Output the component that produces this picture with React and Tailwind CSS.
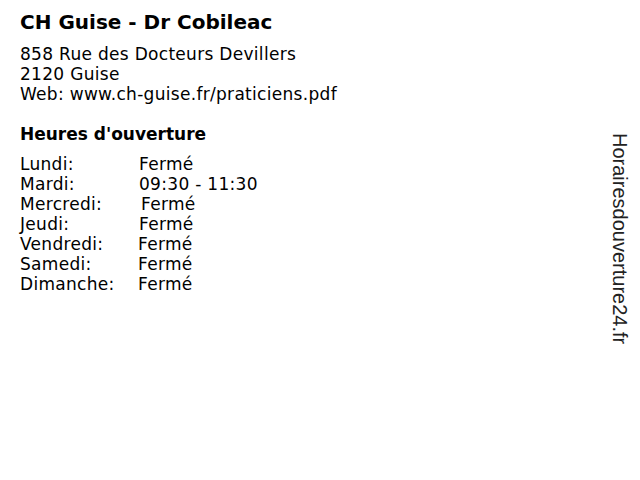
import React from 'react';

const hours = [
  { day: 'Lundi:', value: 'Fermé', pad: 'pl-0' },
  { day: 'Mardi:', value: '09:30 - 11:30', pad: 'pl-0' },
  { day: 'Mercredi:', value: 'Fermé', pad: 'pl-[2px]' },
  { day: 'Jeudi:', value: 'Fermé', pad: 'pl-0' },
  { day: 'Vendredi:', value: 'Fermé', pad: '-ml-[1px]' },
  { day: 'Samedi:', value: 'Fermé', pad: '-ml-[1px]' },
  { day: 'Dimanche:', value: 'Fermé', pad: '-ml-[1px]' },
];

const App = () => {
  return (
    <div className="flex w-[640px] h-[480px] bg-white text-black font-['DejaVu_Sans',sans-serif]">
      <div className="flex-1 pl-[20px] pt-[8px]">
        <h1 className="text-[20px] font-bold leading-[28px]">CH Guise - Dr Cobileac</h1>
        <div className="mt-[8px] text-[17px] tracking-[0.3px] leading-[20px]">
          <div>858 Rue des Docteurs Devillers</div>
          <div>2120 Guise</div>
          <div>Web: www.ch-guise.fr/praticiens.pdf</div>
        </div>
        <h2 className="mt-[18px] text-[17px] font-bold leading-[24px]">Heures d'ouverture</h2>
        <div className="mt-[8px] text-[17px] tracking-[0.3px] leading-[20px]">
          {hours.map((h) => (
            <div key={h.day} className="flex">
              <div className="w-[119px]">{h.day}</div>
              <div className={h.pad}>{h.value}</div>
            </div>
          ))}
        </div>
      </div>
      <div className="w-[40px] pt-[133px] flex justify-center">
        <div className="[writing-mode:vertical-rl] text-[20px] leading-[20px] font-['Liberation_Sans',sans-serif] text-[#222]">
          Horairesdouverture24.fr
        </div>
      </div>
    </div>
  );
};

export default App;
